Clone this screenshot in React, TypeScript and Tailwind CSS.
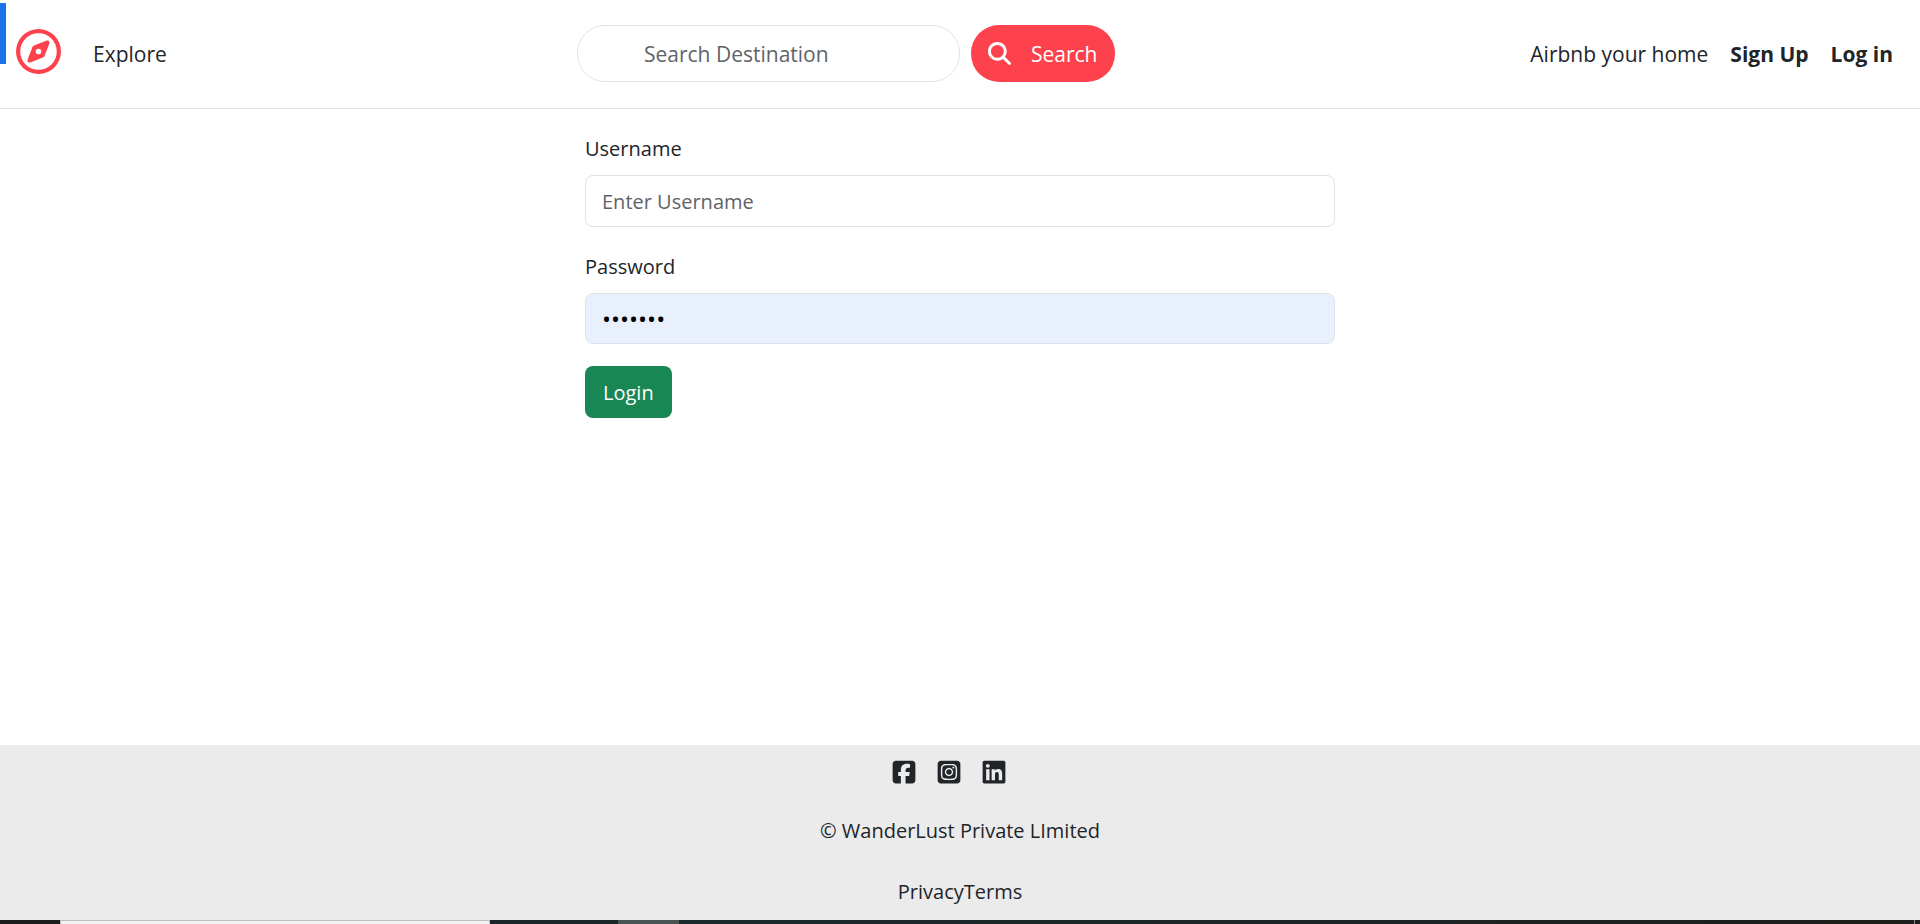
import { FaLinkedin, FaMagnifyingGlass, FaRegCompass, FaSquareFacebook, FaSquareInstagram } from "react-icons/fa6";

function Navbar() {
  return (
    <nav className="relative grid h-[109px] grid-cols-[1fr_auto_1fr] items-center border-b border-[#dee2e6] bg-white px-4 pb-[2px] text-[21px]">
      <div className="absolute left-0 top-[3px] h-[61px] w-[6px] bg-[#1a73e8]" />
      <div className="flex items-center gap-8">
        <a href="#home" aria-label="WanderLust" className="pb-1 text-[#fe424d]">
          <FaRegCompass className="size-[45px]" />
        </a>
        <a href="#explore" className="pt-[2px]">Explore</a>
      </div>
      <form className="mr-[228px] flex items-center gap-[11px]" onSubmit={(e) => e.preventDefault()}>
        <input
          type="search"
          aria-label="Search Destination"
          placeholder="Search Destination"
          className="h-[57px] w-[383px] rounded-[28px] border border-[#dee2e6] px-[66px] pt-[2px] outline-none placeholder:text-[#5f6368]"
        />
        <button type="submit" className="flex h-[57px] w-36 items-center gap-5 rounded-[28px] bg-[#fe424d] pl-[17px] text-white">
          <FaMagnifyingGlass className="size-[23px]" />
          <span className="pt-[2px]">Search</span>
        </button>
      </form>
      <div className="flex items-center justify-end gap-[22px] whitespace-nowrap pr-[11px] pt-[2px]">
        <a href="#host">Airbnb your home</a>
        <a href="#signup" className="font-bold">Sign Up</a>
        <a href="#login" className="font-bold">Log in</a>
      </div>
    </nav>
  );
}

function LoginForm() {
  return (
    <form className="mx-auto flex w-full max-w-[750px] flex-col pt-[23px]" onSubmit={(e) => e.preventDefault()}>
      <label htmlFor="username" className="mb-[10px]">Username</label>
      <input
        id="username"
        type="text"
        placeholder="Enter Username"
        className="mb-[23px] h-[52px] rounded-lg border border-[#dee2e6] px-4 outline-none placeholder:text-[#5f6368]"
      />
      <label htmlFor="password" className="mb-[10px]">Password</label>
      <input
        id="password"
        type="password"
        defaultValue="example"
        className="mb-[22px] h-[51px] rounded-lg border border-[#dee2e6] bg-[#e8f0fe] px-4 text-2xl text-black outline-none"
      />
      <button type="submit" className="h-[52px] self-start rounded-lg bg-[#198754] px-[18px] text-white">
        Login
      </button>
    </form>
  );
}

function Footer() {
  return (
    <footer className="flex h-[175px] flex-col items-center bg-[#ebebeb] pt-[14px]">
      <div className="mr-[22px] flex gap-[19px]">
        <a href="#facebook" aria-label="Facebook"><FaSquareFacebook className="size-[26px]" /></a>
        <a href="#instagram" aria-label="Instagram"><FaSquareInstagram className="size-[26px]" /></a>
        <a href="#linkedin" aria-label="LinkedIn"><FaLinkedin className="size-[26px]" /></a>
      </div>
      <p className="mt-[29px]">© WanderLust Private LImited</p>
      <div className="mt-7 flex">
        <a href="#privacy">Privacy</a>
        <a href="#terms">Terms</a>
      </div>
    </footer>
  );
}

function TaskbarEdge() {
  return (
    <div className="flex h-1 bg-[#1b2527]">
      <div className="w-[60px] bg-[#1c1c1c]" />
      <div className="w-[430px] border-x border-t border-[#bcc0bc] bg-[#f3f3f3]" />
      <div className="w-32" />
      <div className="w-[61px] bg-[#485352]" />
      <div className="flex-1 bg-linear-to-r from-[#1b2a2d] to-[#1e1e1c]" />
      <div className="w-px bg-[#8a8a8a]" />
      <div className="w-[5px] bg-[#1e1e1c]" />
    </div>
  );
}

export default function App() {
  return (
    <div className="flex min-h-screen flex-col bg-white font-['Open_Sans','Noto_Sans',sans-serif] text-[20px] leading-[33px] text-[#212529]">
      <Navbar />
      <main className="flex-1">
        <LoginForm />
      </main>
      <Footer />
      <TaskbarEdge />
    </div>
  );
}
